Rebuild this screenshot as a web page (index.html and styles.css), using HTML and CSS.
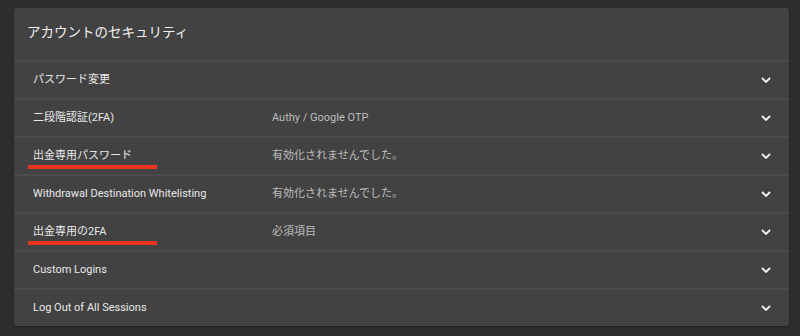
FILE: index.html
```html
<!DOCTYPE html>
<html lang="ja">
  <head>
    <meta charset="UTF-8" />
    <meta name="viewport" content="width=device-width, initial-scale=1.0" />
    <title>アカウントのセキュリティ</title>
    <link rel="stylesheet" href="styles.css">
  </head>
  <body>
    <div class="root">
      <div class="card">
        <div class="card-header">アカウントのセキュリティ</div>
        <div class="row">
          <div class="label">パスワード変更</div>
          <div class="value"></div>
          <svg class="chevron" viewBox="0 0 10 6"><path d="M1 1l4 4 4-4" /></svg>
        </div>
        <div class="row">
          <div class="label">二段階認証(2FA)</div>
          <div class="value">Authy / Google OTP</div>
          <svg class="chevron" viewBox="0 0 10 6"><path d="M1 1l4 4 4-4" /></svg>
        </div>
        <div class="row">
          <div class="label marked">出金専用パスワード</div>
          <div class="value">有効化されませんでした。</div>
          <svg class="chevron" viewBox="0 0 10 6"><path d="M1 1l4 4 4-4" /></svg>
        </div>
        <div class="row">
          <div class="label">Withdrawal Destination Whitelisting</div>
          <div class="value">有効化されませんでした。</div>
          <svg class="chevron" viewBox="0 0 10 6"><path d="M1 1l4 4 4-4" /></svg>
        </div>
        <div class="row">
          <div class="label marked">出金専用の2FA</div>
          <div class="value">必須項目</div>
          <svg class="chevron" viewBox="0 0 10 6"><path d="M1 1l4 4 4-4" /></svg>
        </div>
        <div class="row">
          <div class="label">Custom Logins</div>
          <div class="value"></div>
          <svg class="chevron" viewBox="0 0 10 6"><path d="M1 1l4 4 4-4" /></svg>
        </div>
        <div class="row">
          <div class="label">Log Out of All Sessions</div>
          <div class="value"></div>
          <svg class="chevron" viewBox="0 0 10 6"><path d="M1 1l4 4 4-4" /></svg>
        </div>
      </div>
    </div>
  </body>
</html>
```

FILE: styles.css
```css
html,
body {
  margin: 0;
  padding: 0;
  background: #2e2e2e;
}

.root {
  padding: 8px 11px 10px 14px;
  font-family: Roboto, "Noto Sans CJK JP", sans-serif;
}

.card {
  background: #424242;
  border-radius: 3px;
  box-shadow: 0 1px 2px rgba(0, 0, 0, 0.4);
  overflow: hidden;
}

.card-header {
  height: 46px;
  display: flex;
  align-items: center;
  padding: 0 0 6px 13px;
  font-size: 13.5px;
  color: #f2f2f2;
  border-bottom: 2px solid #4b4b4b;
}

.row {
  display: flex;
  align-items: center;
  height: 36px;
  padding: 0 18px 0 19px;
  font-size: 11px;
  line-height: 16px;
  border-bottom: 2px solid #4b4b4b;
}

.row:last-child {
  border-bottom: none;
}

.label {
  position: relative;
  width: 239px;
  color: #e8e8e8;
}

.label.marked::after {
  content: "";
  position: absolute;
  left: -5px;
  top: 17px;
  width: 129px;
  height: 4px;
  background: #e8341c;
}

.value {
  flex: 1;
  color: #bdbdbd;
}

.chevron {
  width: 10px;
  height: 6px;
  fill: none;
  stroke: #f5f5f5;
  stroke-width: 1.8;
}
```
